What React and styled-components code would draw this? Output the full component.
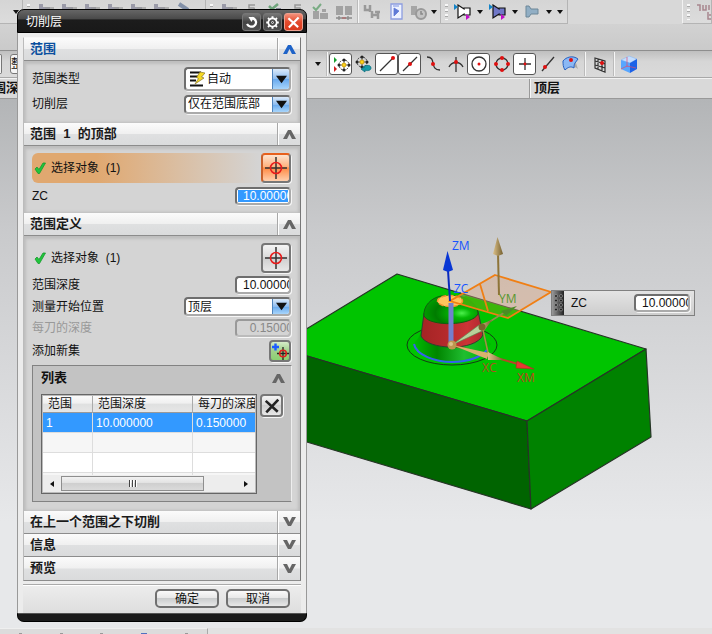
import React, { useState } from 'react';
import styled, { createGlobalStyle, css } from 'styled-components';

const GlobalStyle = createGlobalStyle`
  * { box-sizing: border-box; }
  body { margin: 0; }
  body, button, input, select, table {
    font-family: "Liberation Sans", "Noto Sans CJK SC", sans-serif;
    font-size: 12px;
    line-height: 16px;
    color: #111;
  }
  button, input, select { margin: 0; padding: 0; }
`;

/* ---------- application frame ---------- */
const Page = styled.div`
  position: relative;
  min-height: 100vh;
  display: flex;
  flex-direction: column;
  overflow: hidden;
  background: #d8d8d8;
`;
const CommandRow = styled.div`
  display: flex;
  height: 24px;
`;
const CommandBar = styled.div`
  display: flex;
  align-items: center;
  height: 24px;
  overflow: hidden;
  background: linear-gradient(#d5d5d5, #dcdcdc);
  border-right: 1px solid #b4b4b4;
  border-bottom: 1px solid #b4b4b4;
  flex: ${(p) => (p.$width ? `0 0 ${p.$width}px` : '0 0 auto')};
  margin-left: ${(p) => (p.$last ? 'auto' : '0')};
  border-left: ${(p) => (p.$last ? '1px solid #f2f2f2' : '0')};
`;
const EmptyBand = styled.div`
  height: 27px;
  background: linear-gradient(#d2d2d2, #cacaca);
  border-bottom: 1px solid #8e8e8e;
`;
const SnapBar = styled.div`
  display: flex;
  align-items: center;
  height: 27px;
  background: linear-gradient(#bfbfbf, #d6d6d6 40%, #dadada);
  border-bottom: 1px solid #a8a8a8;
`;
const SnapLead = styled.div`
  display: flex;
  align-items: center;
  gap: 8px;
  flex: 0 0 312px;
`;
const LeadBox = styled.button`
  height: 20px;
  width: ${(p) => p.$width}px;
  overflow: hidden;
  text-align: left;
  white-space: nowrap;
  background: #f4f4f4;
  border: 1px solid #777;
  border-left-width: ${(p) => (p.$cut ? 0 : 1)}px;
  border-radius: ${(p) => (p.$cut ? '0 3px 3px 0' : '3px')};
`;
const PromptBar = styled.div`
  display: flex;
  height: 21px;
  line-height: 18px;
  font-size: 13px;
  font-weight: bold;
  background: #d9d9d9;
  border-top: 1px solid #f2f2f2;
  border-bottom: 1px solid #999;
`;
const PromptCell = styled.div`
  flex: ${(p) => (p.$lead ? '0 0 530px' : '1 1 auto')};
  padding-left: 3px;
  overflow: hidden;
  text-indent: ${(p) => (p.$lead ? '-10px' : '0')};
  border-right: ${(p) => (p.$lead ? '1px solid #999' : '0')};
  border-left: ${(p) => (p.$lead ? '0' : '1px solid #f6f6f6')};
`;
const Viewport = styled.main`
  flex: 1;
  min-height: 529px;
  overflow: hidden;
  background: linear-gradient(#b3b5b7, #c9cacc 25%, #e7e8ea 80%);
`;
const Scene = styled.svg`
  display: block;
  font-family: "Open Sans", sans-serif;
  font-size: 12px;
`;
const StatusBar = styled.div`
  display: flex;
  height: 6px;
  background: #e2e2e2;
`;
const StatusPane = styled.div`
  display: flex;
  align-items: flex-end;
  justify-content: space-around;
  flex: 0 0 208px;
  overflow: hidden;
  background: #dcdcdc;
  border-top: 1px solid #efefef;
  border-right: 1px solid #aaa;
`;
const StatusTick = styled.i`
  width: ${(p) => (p.$blue ? 6 : 3)}px;
  height: 1px;
  background: ${(p) => (p.$blue ? '#5070c0' : '#999')};
`;

const ToolButton = styled.button`
  display: flex;
  align-items: center;
  justify-content: center;
  flex: 0 0 ${(p) => p.$width || 23}px;
  height: 22px;
  background: ${(p) => (p.$on ? '#fff' : 'transparent')};
  border: 1px solid ${(p) => (p.$on ? '#555' : 'transparent')};
  border-radius: 3px;
`;
const Divider = styled.span`
  flex: 0 0 2px;
  height: ${(p) => p.$height || 24}px;
  margin: 0 ${(p) => p.$gap ?? 1}px 0 ${(p) => p.$before ?? 2}px;
  border-left: 1px solid #bbb;
  border-right: 1px solid #f6f6f6;
`;
const Grip = styled.span`
  flex: 0 0 3px;
  height: 16px;
  margin: 0 4px;
  background: repeating-linear-gradient(#f8f8f8 0 2px, #aaa 2px 3px, transparent 3px 5px);
`;
const Spacer = styled.span`
  flex: 0 0 ${(p) => p.$w}px;
`;

/* ---------- dialog ---------- */
const Dialog = styled.section`
  position: absolute;
  left: 17px;
  top: 9px;
  width: 290px;
  background: #ececec;
  border: 1px solid #999;
  border-top: 0;
  border-bottom: 0;
  border-radius: 7px;
`;
const TitleBar = styled.header`
  display: flex;
  align-items: center;
  gap: 2px;
  height: 24px;
  margin: 0 -1px;
  padding: 2px 3px 0 8px;
  background: linear-gradient(#666, #4a4a4a 40%, #1c1c1c 45%, #191919);
  border: 1px solid #000;
  border-radius: 7px 7px 0 0;
`;
const Title = styled.h1`
  flex: 1;
  margin: 0;
  font-size: 12px;
  font-weight: normal;
  color: #fff;
`;
const TitleButton = styled.button`
  display: flex;
  align-items: center;
  justify-content: center;
  width: 19px;
  height: 18px;
  background: ${(p) => (p.$close ? 'linear-gradient(#f5907a, #e24a2c 50%, #d93a1c)' : 'linear-gradient(#777, #444 50%, #4e4e4e)')};
  border: 1px solid ${(p) => (p.$close ? '#eca090' : '#777')};
  border-radius: 3px;
`;
const Panels = styled.div`
  margin: 4px 5px 0 5px;
  border: 1px solid #8c8c8c;
  border-left-color: #bbb;
  border-top-color: #f6f6f6;
  border-right-color: #777;
`;
const PanelHead = styled.h2`
  display: flex;
  height: 23px;
  margin: 0;
  font-size: 13px;
  line-height: 22px;
  color: ${(p) => (p.$active ? '#0a4f9e' : '#1a1a1a')};
  background: linear-gradient(#fbfbfb, #f0f0f0 48%, #dfe0e1 52%, #dadbdc);
  border-bottom: 1px solid #8c8c8c;
  &:last-child { border-bottom: 0; }
`;
const PanelTitle = styled.span`
  flex: 1;
  padding-left: 6px;
  white-space: pre;
`;
const Toggle = styled.button`
  display: flex;
  align-items: center;
  justify-content: center;
  width: 23px;
  background: transparent;
  border: 0;
  border-left: 1px solid #a8a8a8;
  box-shadow: inset 1px 0 #fff;
`;
const PanelBody = styled.div`
  display: flex;
  flex-direction: column;
  gap: ${(p) => p.$gap}px;
  padding: ${(p) => p.$pad};
  background: #d4d4d4;
  box-shadow: inset 2px 3px 3px #bdbdbd, inset -2px -1px 3px #bdbdbd;
`;
const Field = styled.div`
  display: flex;
  align-items: center;
  justify-content: space-between;
  min-height: ${(p) => p.$h || 18}px;
  color: ${(p) => (p.$off ? '#999' : '#111')};
`;
const inset = css`
  border: 2px solid #6e6e6e;
  border-right-color: #aaa;
  border-bottom-color: #aaa;
  border-radius: 4px;
  box-shadow: 1px 1px #f6f6f6;
`;
const NumberInput = styled.input`
  ${inset}
  width: 56px;
  height: 18px;
  padding: 0 0 0 6px;
  line-height: 14px;
  background: ${(p) => (p.disabled ? '#d4d4d4' : '#fff')};
  color: ${(p) => (p.disabled ? '#888' : '#111')};
  ${(p) => p.disabled && css`border-color: #999 #bbb #bbb #999;`}
  ${(p) => p.$selected && css`
    color: #fff;
    background: linear-gradient(#3399ff, #3399ff) 1px 1px / 50px 12px no-repeat, #fff;
  `}
`;
const SelectShell = styled.div`
  ${inset}
  display: flex;
  width: 107px;
  height: ${(p) => p.$h || 19}px;
  overflow: hidden;
  background: #fff;
`;
const SelectIcon = styled.span`
  display: flex;
  align-items: center;
  padding-left: 3px;
`;
const Select = styled.select`
  flex: 1;
  min-width: 0;
  padding: 0 0 0 2px;
  line-height: 14px;
  background: transparent;
  border: 0;
  appearance: none;
`;
const SelectArrow = styled.span`
  display: flex;
  flex: 0 0 17px;
  align-items: center;
  justify-content: center;
  background: linear-gradient(#dbeafa, #8dbcf0 50%, #69aaee 52%, #a8d5fb);
  border-left: 1px solid #4f84bd;
  pointer-events: none;
`;
const PickRow = styled.div`
  display: flex;
  align-items: center;
  min-height: 30px;
  border-radius: 6px 0 0 6px;
  background: ${(p) => (p.$active ? 'linear-gradient(90deg, #e0a870, #e0a870 25%, #d4d4d4 88%)' : 'none')};
`;
const PickLabel = styled.span`
  flex: 1;
  padding-left: 4px;
  white-space: pre;
`;
const PickButton = styled.button`
  ${inset}
  display: flex;
  align-items: center;
  justify-content: center;
  width: ${(p) => p.$size || 30}px;
  height: ${(p) => p.$size || 30}px;
  border-color: ${(p) => (p.$tone === 'hot' ? '#e8601c #777 #777 #c8602c' : '#777')};
  background: ${(p) =>
    p.$tone === 'hot' ? 'linear-gradient(#fde3cf, #ffb27e 45%, #ff8a44 50%, #ffd0ae)'
      : p.$tone === 'green' ? 'linear-gradient(#d5ecc8, #9fd08a 50%, #8cd070)'
        : 'linear-gradient(#f4f4f4, #dcdcdc 45%, #cfcfcf 50%, #e8e8e8)'};
`;
const ListBox = styled.div`
  margin-right: -1px;
  padding: 0 6px 7px 8px;
  background: #c3c3c3;
  border: 1px solid #828282;
  border-right-color: #eee;
`;
const ListHead = styled.h3`
  display: flex;
  align-items: center;
  justify-content: space-between;
  height: 28px;
  margin: 0;
  padding-bottom: 4px;
  font-size: 13px;
`;
const PlainButton = styled.button`
  display: flex;
  background: transparent;
  border: 0;
`;
const ListRow = styled.div`
  display: flex;
  align-items: flex-start;
  gap: 3px;
`;
const TableFrame = styled.div`
  flex: 0 0 216px;
  height: 100px;
  overflow: hidden;
  display: flex;
  flex-direction: column;
  background: #fff;
  border: 1px solid #666;
  outline: 1px solid #bbb;
  outline-offset: -2px;
  padding: 1px;
`;
const TableClip = styled.div`
  flex: 1;
  overflow: hidden;
`;
const Table = styled.table`
  width: 240px;
  table-layout: fixed;
  border-collapse: separate;
  border-spacing: 0;
`;
const Th = styled.th`
  width: ${(p) => p.$w}px;
  height: 17px;
  padding: 0 0 0 5px;
  line-height: 16px;
  text-align: left;
  font-weight: normal;
  white-space: nowrap;
  background: linear-gradient(#fafafa, #f0f0f0 45%, #dfe0e0 50%, #e6e6e6);
  border-bottom: 1px solid #999;
  border-right: 1px solid #aaa;
`;
const Td = styled.td`
  height: 20px;
  padding: 0 0 0 3px;
  color: #fff;
  background: ${(p) => (p.$on ? '#3399ff' : p.$alt ? '#f6f6f6' : '#fff')};
  border-right: 1px solid #ddd;
  border-bottom: 1px solid #ddd;
`;
const ScrollTrack = styled.div`
  display: flex;
  align-items: center;
  height: 17px;
  padding: 0 6px;
  background: #ededed;
`;
const ScrollThumb = styled.div`
  display: flex;
  align-items: center;
  justify-content: center;
  gap: 1px;
  width: 143px;
  height: 15px;
  margin: 0 auto 0 6px;
  background: linear-gradient(#f2f2f2, #e2e2e2 45%, #cfcfcf 50%, #dadada);
  border: 1px solid #8e8e8e;
`;
const ThumbLine = styled.i`
  width: 2px;
  height: 7px;
  border-left: 1px solid #444;
  border-right: 1px solid #fff;
`;
const Actions = styled.footer`
  display: flex;
  justify-content: flex-end;
  gap: 7px;
  margin: 3px 5px 0;
  padding: 4px 11px 5px;
  background: linear-gradient(#ededed, #dedede);
  border-top: 1px solid #aaa;
  box-shadow: inset 0 1px #fff;
`;
const ActionButton = styled.button`
  width: 64px;
  height: 19px;
  line-height: 14px;
  background: linear-gradient(#fafafa, #e8e8e8 45%, #cacccd 50%, #e8e8e8);
  border: 2px solid #707070;
  border-radius: 5px;
`;
const BottomEdge = styled.div`
  height: 9px;
  margin: 0 -1px;
  background: #1b1b1b;
  border: 1px solid #000;
  border-top-color: #555;
  border-radius: 0 0 7px 7px;
`;

/* ---------- on-canvas input ---------- */
const DynamicInput = styled.label`
  position: absolute;
  left: 551px;
  top: 290px;
  display: flex;
  align-items: center;
  width: 144px;
  height: 26px;
  padding-right: 4px;
  background: linear-gradient(#e4e4e4, #cdcdcd);
  border: 1px solid #808080;
`;
const DragHandle = styled.span`
  display: flex;
  align-items: center;
  justify-content: center;
  align-self: stretch;
  width: 12px;
  background: linear-gradient(90deg, #999, #222);
`;
const DynamicName = styled.span`
  flex: 1;
  padding-left: 7px;
`;

/* ---------- drawings ---------- */
const Chevron = ({ down, color = '#666' }) => (
  <svg width="13" height="10" viewBox="0 0 13 10">
    <path d={down ? 'M0 0H4L6.500 5L9 0H13L8 9H5Z' : 'M0 10H4L6.500 5L9 10H13L8 1H5Z'} fill={color} />
  </svg>
);
const Triangle = ({ dir = 'down', size = 6, color = '#111' }) => (
  <svg width={size} height={size} viewBox="0 0 6 6">
    <path d={{ down: 'M0 1H6L3 5Z', left: 'M5 0V6L1 3Z', right: 'M1 0V6L5 3Z' }[dir]} fill={color} />
  </svg>
);
const Caret = ({ width = 8 }) => (
  <ToolButton $width={width} aria-label="更多"><Triangle /></ToolButton>
);
const Check = () => (
  <svg width="15" height="14" viewBox="0 0 15 14">
    <path d="M3 8L5 6L7 8.500L11 2L13.500 2L7.500 12.500H6Z" fill="#20c53c" stroke="#159a2c" strokeWidth="0.800" />
  </svg>
);
const Crosshair = () => (
  <svg width="22" height="22" viewBox="0 0 22 22" fill="none">
    <path d="M0 11H22M11 0V22" stroke="#333" strokeWidth="1.500" />
    <circle cx="11" cy="11" r="5.500" stroke="#e81c1c" strokeWidth="1.600" />
  </svg>
);
const AddSet = () => (
  <svg width="18" height="18" viewBox="0 0 18 18" fill="none">
    <path d="M6 11.500H18M12 5V18" stroke="#222" strokeWidth="1.300" />
    <circle cx="12" cy="11.500" r="3.300" stroke="#e02020" strokeWidth="1.600" />
    <path d="M1 5H8M4.500 1.500V8.500" stroke="#1c5cff" strokeWidth="2.400" />
  </svg>
);
const AutoIcon = () => (
  <svg width="16" height="16" viewBox="0 0 16 16">
    <path d="M1 1.500H12M1 5.500H9M1 9.500H7M1 14.500H14" stroke="#111" strokeWidth="2" />
    <path d="M11 1L16 2L12.500 6L15 7L6 13L9.500 7.500L7.500 6.500Z" fill="#f6d923" stroke="#88762a" strokeWidth="0.700" />
  </svg>
);
const Cross = ({ color, size }) => (
  <svg width={size} height={size} viewBox="0 0 14 14">
    <path d="M1.500 2.500L12 12M12.500 1.500L2 12.500" stroke={color} strokeWidth="2.300" />
  </svg>
);
const ResetIcon = () => (
  <svg width="13" height="13" viewBox="0 0 13 13" fill="none">
    <path d="M7 2C12 3 12 8 9 10C6.500 11.500 3.500 10.500 2 8" stroke="#fff" strokeWidth="2.300" />
    <path d="M3.500 1H9L6.500 6Z" fill="#fff" />
  </svg>
);
const GearIcon = () => (
  <svg width="15" height="15" viewBox="-7.500 -7.500 15 15" fill="none" stroke="#fff">
    <circle r="4.200" strokeWidth="1.700" />
    <circle r="1" strokeWidth="0.800" />
    <path d="M0 -4.500V-6.300M0 4.500V6.300M-4.500 0H-6.300M4.500 0H6.300M-3.200 -3.200L-4.500 -4.500M3.200 3.200L4.500 4.500M-3.200 3.200L-4.500 4.500M3.200 -3.200L4.500 -4.500" strokeWidth="1.900" />
  </svg>
);
const Glyph = ({ children, h = 18 }) => (
  <svg width="20" height={h} viewBox={`0 0 20 ${h}`} fill="none" stroke="#333" strokeWidth="1.300" style={undefined}>{children}</svg>
);
const Dot = ({ x, y, r = 2 }) => <circle cx={x} cy={y} r={r} fill="#e01010" stroke="none" />;

const Compass = ({ x, y, r }) => (
  <g>
    <circle cx={x} cy={y} r={r} strokeWidth="1" strokeDasharray="2 1" />
    <g fill="#222" stroke="none">
      <circle cx={x - r} cy={y} r="1.500" /><circle cx={x + r} cy={y} r="1.500" />
      <circle cx={x} cy={y - r} r="1.500" /><circle cx={x} cy={y + r} r="1.500" />
    </g>
    <path d={`M${x - r} ${y}H${x + r}M${x} ${y - r}V${y + r}`} strokeWidth="0.800" />
    <circle cx={x} cy={y} r="2" fill="#ffd21c" stroke="#c89a00" strokeWidth="0.800" />
  </g>
);
const snapIcons = {
  quick: <Glyph><Compass x={13} y={10} r={5} /><path d="M3 2V8L6 5Z" fill="#18a030" stroke="none" /><path d="M3 11V17L6 14Z" fill="#d02020" stroke="none" /></Glyph>,
  cycle: <Glyph><Compass x={8} y={7} r={5} /><path d="M9 13C9 10 17 9 17 13C17 16 12 16 11 15V17L7 14L11 12" fill="#159aa8" stroke="#0c7080" strokeWidth="0.800" /></Glyph>,
  end: <Glyph><path d="M3 16L16 3" /><Dot x={16} y={3} /></Glyph>,
  mid: <Glyph><path d="M3 16L17 2" /><Dot x={10} y={9} /></Glyph>,
  pole: <Glyph><path d="M4 2C14 2 6 15 17 15" /><Dot x={10} y={9} /></Glyph>,
  cross: <Glyph><path d="M10 2V17M3 12C6 6 14 6 17 12" /><Dot x={10} y={7} /></Glyph>,
  centre: <Glyph><circle cx="10" cy="9" r="7" /><Dot x={10} y={9} r={1.5} /></Glyph>,
  quadrant: <Glyph><circle cx="10" cy="9" r="6" /><Dot x={10} y={3} /><Dot x={10} y={15} /><Dot x={4} y={9} /><Dot x={16} y={9} /></Glyph>,
  exist: <Glyph><path d="M10 3V15M4 9H16" /><Dot x={10} y={9} r={1.4} /></Glyph>,
  curve: <Glyph><path d="M4 16L16 2" /><Dot x={7} y={12} /></Glyph>,
  surface: (
    <Glyph>
      <path d="M7 13C9 11 13 11 17 14L15 8Z" fill="#aaa" stroke="none" />
      <path d="M2 6C5 2 12 0 17 4L14 8C13 10 13 11 13 13C10 11 7 12 4 15C2 12 2 9 2 6Z" fill="#8bb8f5" stroke="#2760c0" strokeWidth="1" />
      <Dot x={10} y={5} />
    </Glyph>
  ),
  grid: <Glyph><path d="M5 3L15 6V17L5 13ZM8 4V14M12 5V16M5 6L15 9M5 10L15 13" strokeWidth="1.200" /><Dot x={12} y={8} /></Glyph>,
  cube: <Glyph><path d="M2 5L10 1L18 4L11 8Z" fill="#c4deff" stroke="#7fb0ee" strokeWidth="0.500" /><path d="M2 5L11 8V18L2 14Z" fill="#58a6ff" stroke="none" /><path d="M11 8L18 4V14L11 18Z" fill="#1c62e8" stroke="none" /><path d="M8 2V12M2 14L8 11L17 13" stroke="#e44a6a" strokeWidth="0.700" /></Glyph>,
};

const DimTool = ({ kind = 0 }) => (
  <Glyph>
    {kind === 0 && <path d="M2 2V7H7M7 2V9M9 8V15M10 12H15M15 9V16M12 9H17" stroke="#999" strokeWidth="2.500" />}
    {kind === 1 && <path d="M2 8H8V16H2ZM9 10H17V16H9ZM11 6H15V9H11Z" fill="#a2a2a2" stroke="none" />}
    {kind === 2 && <><path d="M2 3H9V12H2ZM11 3H18V12H11Z" fill="#a2a2a2" stroke="none" /><path d="M2 15H18M5 13V17M14 13V17" stroke="#8a8a8a" /><path d="M8 15H12" stroke="#b06a6a" /></>}
    {kind === 3 && <><path d="M2 3H8V12H2Z" fill="#a6a6a6" stroke="none" /><circle cx="12" cy="11" r="5" fill="#c4c4c4" stroke="#999" strokeWidth="2" /><path d="M12 8V11H14" stroke="#888" strokeWidth="1.500" /></>}
    {kind === 1 && <path d="M2 4L5 7L10 1" stroke="#7aac84" strokeWidth="2" />}
  </Glyph>
);
const CutTool = ({ kind = 0 }) => (
  <Glyph h={24}>
    {kind === 0 && <><path d="M5 4V9H14" stroke="#9a9aa8" strokeWidth="4" /><path d="M9 8H18" stroke="#999" /></>}
    {kind === 1 && <path d="M5 4L14 10" stroke="#8290a8" strokeWidth="4" />}
    {kind === 2 && <path d="M13 5H7V8H12C14 12 9 13 6 11" stroke="#999" strokeWidth="1.500" />}
    {kind === 3 && <><path d="M4 6L7 9L13 4" stroke="#6fa47c" strokeWidth="2.500" /><path d="M11 8H16V10H11Z" fill="#889" stroke="none" /></>}
  </Glyph>
);
const ReportIcon = () => (
  <Glyph><path d="M5 1H16V16H5Z" fill="#eef2ff" stroke="#8d9de0" /><path d="M8 5L13 8L8 13ZM7 3H13" fill="#5f7ad6" stroke="#5f7ad6" strokeWidth="0.800" /></Glyph>
);
const HornIcon = ({ fill = '#fff', marks }) => (
  <Glyph>
    {marks
      ? <path d="M5 2L11 6V5H17V12H11V11L5 15Z" fill={fill} stroke="#111" strokeWidth="1.200" />
      : <path d="M4 3H7L9 6H16V11H9L7 14H4Z" fill={fill} stroke="#6d8798" strokeWidth="1" />}
    {marks && <><path d="M1 1V7L5 4Z" fill="#1384c8" stroke="none" /><path d="M13 11V17L17 14Z" fill="#c010c8" stroke="none" /></>}
  </Glyph>
);
const TreeIcon = () => (
  <Glyph><path d="M2 2H5V8M8 2V7H11V2M14 2V7M17 2V7M13 9V16H18M14 12H18" stroke="#a8868e" strokeWidth="1.500" /></Glyph>
);
const HandleDots = () => (
  <svg width="9" height="18" viewBox="0 0 9 18" fill="#222" stroke="#aaa" strokeWidth="0.600">
    {[2, 6.5, 11, 15.5].map((y) => <g key={y}><circle cx="2" cy={y} r="1.500" /><circle cx="7" cy={y} r="1.500" /></g>)}
  </svg>
);

const Model = () => (
  <Scene width="712" height="529" viewBox="0 99 712 529" role="img" aria-label="工件模型">
    <defs>
      <linearGradient id="wall"><stop offset="0" stopColor="#a52424" /><stop offset=".4" stopColor="#b42a2c" /><stop offset=".75" stopColor="#cc3436" /><stop offset="1" stopColor="#b02830" /></linearGradient>
      <radialGradient id="dome" cx=".7" cy=".62" r=".7"><stop offset="0" stopColor="#4cf04c" /><stop offset=".25" stopColor="#05b805" /><stop offset=".7" stopColor="#007c00" /><stop offset="1" stopColor="#009a00" /></radialGradient>
      <linearGradient id="skirt"><stop offset="0" stopColor="#00bd00" /><stop offset=".3" stopColor="#008500" /><stop offset=".65" stopColor="#20bd30" /><stop offset="1" stopColor="#00b800" /></linearGradient>
      <linearGradient id="tan"><stop offset="0" stopColor="#dcc088" /><stop offset="1" stopColor="#75602f" /></linearGradient>
    </defs>
    <g stroke="#263426" strokeWidth="1.200" strokeLinejoin="round">
      <path d="M397 274L646 349L527 421L280 348V345Z" fill="#00c400" />
      <path d="M280 348L527 421L531 509L280 434Z" fill="#006400" />
      <path d="M527 421L646 349L651 437L531 509Z" fill="#008200" />
    </g>
    <ellipse cx="452" cy="345" rx="45" ry="20" fill="none" stroke="#153c15" />
    <path d="M414 342C419 339 420 334 422 329H482C484 337 487 340 491 344C484 357 469 362 452 362C434 362 419 355 414 342Z" fill="url(#skirt)" />
    <path d="M414 344C416 355 435 362 452 362C470 362 482 356 487 350" fill="none" stroke="#3561ee" strokeWidth="2" />
    <path d="M424 313L421 336C427 350 475 352 483 335L478 311Z" fill="url(#wall)" stroke="#304030" />
    <path d="M424 316C423 306 431 298 441 296H459C470 298 478 306 478 314C472 326 430 327 424 316Z" fill="url(#dome)" stroke="#105c10" />
    <path d="M495 275L551 292L508 318L450 301Z" fill="#d8a27c" fillOpacity=".42" />
    <path d="M466 296L519 311L508 318L450 301Z" fill="#35b700" opacity=".8" />
    <ellipse cx="450" cy="301" rx="12.500" ry="5.500" fill="#ffc45c" stroke="#f1932e" strokeWidth="1.500" strokeDasharray="5 2" />
    <path d="M451 303V343" stroke="#7380ce" strokeWidth="5" />
    <path d="M495 275L551 292L508 318L450 301ZM480 284L488 311" fill="none" stroke="#f07f14" strokeWidth="1.800" />
    <path d="M499 295L498 253" stroke="#8e7438" strokeWidth="2" />
    <path d="M497.500 237L503 254L498 256L493 254Z" fill="url(#tan)" />
    <path d="M450 301L448 270" stroke="#0828bd" strokeWidth="2" />
    <path d="M447.500 251L453 270L448 272L443 270Z" fill="#0836d4" />
    <path d="M452 345L510 309" stroke="#91904c" strokeWidth="1.500" />
    <path d="M501 311L517 306L506 316Z" fill="#4a8d25" />
    <path d="M452 345L479 325L482 331Z" fill="#b9d09a" stroke="#4d8c4d" strokeWidth=".600" />
    <path d="M479 325L492 320L484 331Z" fill="url(#tan)" />
    <circle cx="482" cy="327" r="3.500" fill="#77652d" />
    <path d="M483 330L489 357" stroke="#a98b48" strokeWidth="1.500" />
    <path d="M452 345L518 364" stroke="#b64725" strokeWidth="2" />
    <path d="M452 345L489 353L487 359Z" fill="#d9b26d" />
    <path d="M488 352L504 360L488 360Z" fill="url(#tan)" />
    <path d="M517 361L534 369L516 368Z" fill="#e73832" stroke="#b02c24" strokeWidth=".600" />
    <circle cx="452" cy="345" r="4.500" fill="#bd984f" /><circle cx="451" cy="344" r="2" fill="#ddc28a" />
    <text x="452" y="250" fill="#1754ff">ZM</text>
    <text x="454" y="293" fill="#1754ff">ZC</text>
    <text x="499" y="303" fill="#57972d">YM</text>
    <text x="482" y="372" fill="#a8521e">XC</text>
    <text x="517" y="382" fill="#bd461c">XM</text>
  </Scene>
);

/* ---------- composed controls ---------- */
const DropDown = ({ id, options, height, icon }) => (
  <SelectShell $h={height}>
    {icon && <SelectIcon>{icon}</SelectIcon>}
    <Select id={id}>{options.map((o) => <option key={o}>{o}</option>)}</Select>
    <SelectArrow><Triangle size={11} /></SelectArrow>
  </SelectShell>
);
const Head = ({ title, active, collapsed }) => (
  <PanelHead $active={active}>
    <PanelTitle>{title}</PanelTitle>
    <Toggle aria-label={title} aria-expanded={!collapsed}>
      <Chevron down={collapsed} color={active ? '#1e63c8' : '#666'} />
    </Toggle>
  </PanelHead>
);
const Value = ({ initial, ...rest }) => {
  const [value, setValue] = useState(initial);
  return <NumberInput value={value} onChange={(e) => setValue(e.target.value)} {...rest} />;
};
const Pick = ({ active }) => (
  <PickRow $active={active}>
    <Check />
    <PickLabel>{'选择对象  (1)'}</PickLabel>
    <PickButton aria-label="选择对象" $tone={active ? 'hot' : 'plain'}><Crosshair /></PickButton>
  </PickRow>
);

const CutLevels = () => (
  <Dialog aria-label="切削层">
    <TitleBar>
      <Title>切削层</Title>
      <TitleButton aria-label="重置"><ResetIcon /></TitleButton>
      <TitleButton aria-label="设置"><GearIcon /></TitleButton>
      <TitleButton aria-label="关闭" $close><Cross color="#fff" size={13} /></TitleButton>
    </TitleBar>
    <Panels>
      <Head title="范围" active />
      <PanelBody $gap={3} $pad="6px 9px 9px 8px">
        <Field $h={24}>
          <label htmlFor="range-type">范围类型</label>
          <DropDown id="range-type" options={['自动', '用户定义']} height={24} icon={<AutoIcon />} />
        </Field>
        <Field $h={20}>
          <label htmlFor="levels">切削层</label>
          <DropDown id="levels" options={['仅在范围底部', '恒定']} />
        </Field>
      </PanelBody>
      <Head title="范围  1  的顶部" />
      <PanelBody $gap={4} $pad="7px 9px 8px 8px">
        <Pick active />
        <Field>
          <label htmlFor="top-zc">ZC</label>
          <Value id="top-zc" initial="10.000000" $selected />
        </Field>
      </PanelBody>
      <Head title="范围定义" />
      <PanelBody $gap={3} $pad="7px 9px 9px 8px">
        <Pick />
        <Field>
          <label htmlFor="depth">范围深度</label>
          <Value id="depth" initial="10.000000" />
        </Field>
        <Field>
          <label htmlFor="measure">测量开始位置</label>
          <DropDown id="measure" options={['顶层', '当前范围顶部']} />
        </Field>
        <Field $off>
          <label htmlFor="per-cut">每刀的深度</label>
          <Value id="per-cut" initial="  0.150000" disabled />
        </Field>
        <Field $h={22}>
          <label htmlFor="add-set">添加新集</label>
          <PickButton id="add-set" $size={22} $tone="green"><AddSet /></PickButton>
        </Field>
        <ListBox>
          <ListHead>列表<PlainButton aria-label="列表"><Chevron /></PlainButton></ListHead>
          <ListRow>
            <TableFrame>
              <TableClip>
                <Table>
                  <thead>
                    <tr><Th $w={50}>范围</Th><Th $w={100}>范围深度</Th><Th $w={90}>每刀的深度</Th></tr>
                  </thead>
                  <tbody>
                    <tr><Td $on>1</Td><Td $on>10.000000</Td><Td $on>0.150000</Td></tr>
                    <tr><Td $alt /><Td $alt /><Td $alt /></tr>
                    <tr><Td /><Td /><Td /></tr>
                    <tr><Td $alt /><Td $alt /><Td $alt /></tr>
                  </tbody>
                </Table>
              </TableClip>
              <ScrollTrack>
                <Triangle dir="left" />
                <ScrollThumb><ThumbLine /><ThumbLine /><ThumbLine /></ScrollThumb>
                <Triangle dir="right" />
              </ScrollTrack>
            </TableFrame>
            <PickButton $size={23} aria-label="移除"><Cross color="#222" size={16} /></PickButton>
          </ListRow>
        </ListBox>
      </PanelBody>
      <Head title="在上一个范围之下切削" collapsed />
      <Head title="信息" collapsed />
      <Head title="预览" collapsed />
    </Panels>
    <Actions>
      <ActionButton>确定</ActionButton>
      <ActionButton>取消</ActionButton>
    </Actions>
    <BottomEdge />
  </Dialog>
);

const snapTools = [
  ['quick', true], ['cycle'], ['end', true], ['mid', true], ['pole'], ['cross'],
  ['centre', true], ['quadrant'], ['exist', true], ['curve'], ['surface'],
];

export default function App() {
  return (
    <Page>
      <GlobalStyle />
      <CommandRow>
        <CommandBar $width={23}><Spacer $w={11} /><Caret width={10} /></CommandBar>
        <CommandBar $width={183}>
          <Grip />
          {[0, 0, 0, 0, 0, 0, 1].map((k, i) => <ToolButton key={i} $width={23}><CutTool kind={k} /></ToolButton>)}
        </CommandBar>
        <CommandBar $width={235}>
          <Grip />
          {[0, 2, 3, 2].map((k, i) => <ToolButton key={i} $width={23}><CutTool kind={k} /></ToolButton>)}
          <ToolButton><DimTool kind={1} /></ToolButton>
          <ToolButton><DimTool kind={2} /></ToolButton>
          <Divider $gap={2} $before={2} />
          <ToolButton><DimTool /></ToolButton>
          <ToolButton><ReportIcon /></ToolButton>
          <ToolButton><DimTool kind={3} /></ToolButton>
          <Caret />
        </CommandBar>
        <CommandBar $width={127}>
          <Grip />
          <ToolButton $width={22}><HornIcon marks /></ToolButton><Caret width={12} />
          <ToolButton $width={23}><HornIcon marks fill="#7078c8" /></ToolButton><Caret width={12} />
          <ToolButton $width={22}><HornIcon fill="#91aec4" /></ToolButton><Caret width={12} />
          <Caret width={10} />
        </CommandBar>
        <CommandBar $width={30} $last><Grip /><ToolButton $width={18}><TreeIcon /></ToolButton></CommandBar>
      </CommandRow>
      <EmptyBand />
      <SnapBar>
        <SnapLead>
          <LeadBox $width={2} $cut aria-label="过滤器" />
          <LeadBox $width={120}>整</LeadBox>
        </SnapLead>
        <Caret width={12} />
        <Divider />
        {snapTools.map(([name, on]) => (
          <ToolButton key={name} $on={on} aria-label={name}>{snapIcons[name]}</ToolButton>
        ))}
        <Divider $gap={2} />
        <ToolButton aria-label="grid">{snapIcons.grid}</ToolButton>
        <Divider $gap={2} />
        <ToolButton aria-label="cube">{snapIcons.cube}</ToolButton>
      </SnapBar>
      <PromptBar>
        <PromptCell $lead>围深</PromptCell>
        <PromptCell>顶层</PromptCell>
      </PromptBar>
      <Viewport><Model /></Viewport>
      <StatusBar>
        <StatusPane>
          <StatusTick /><StatusTick /><StatusTick /><StatusTick $blue /><StatusTick />
        </StatusPane>
      </StatusBar>
      <CutLevels />
      <DynamicInput>
        <DragHandle><HandleDots /></DragHandle>
        <DynamicName>ZC</DynamicName>
        <Value initial="10.000000" />
      </DynamicInput>
    </Page>
  );
}
